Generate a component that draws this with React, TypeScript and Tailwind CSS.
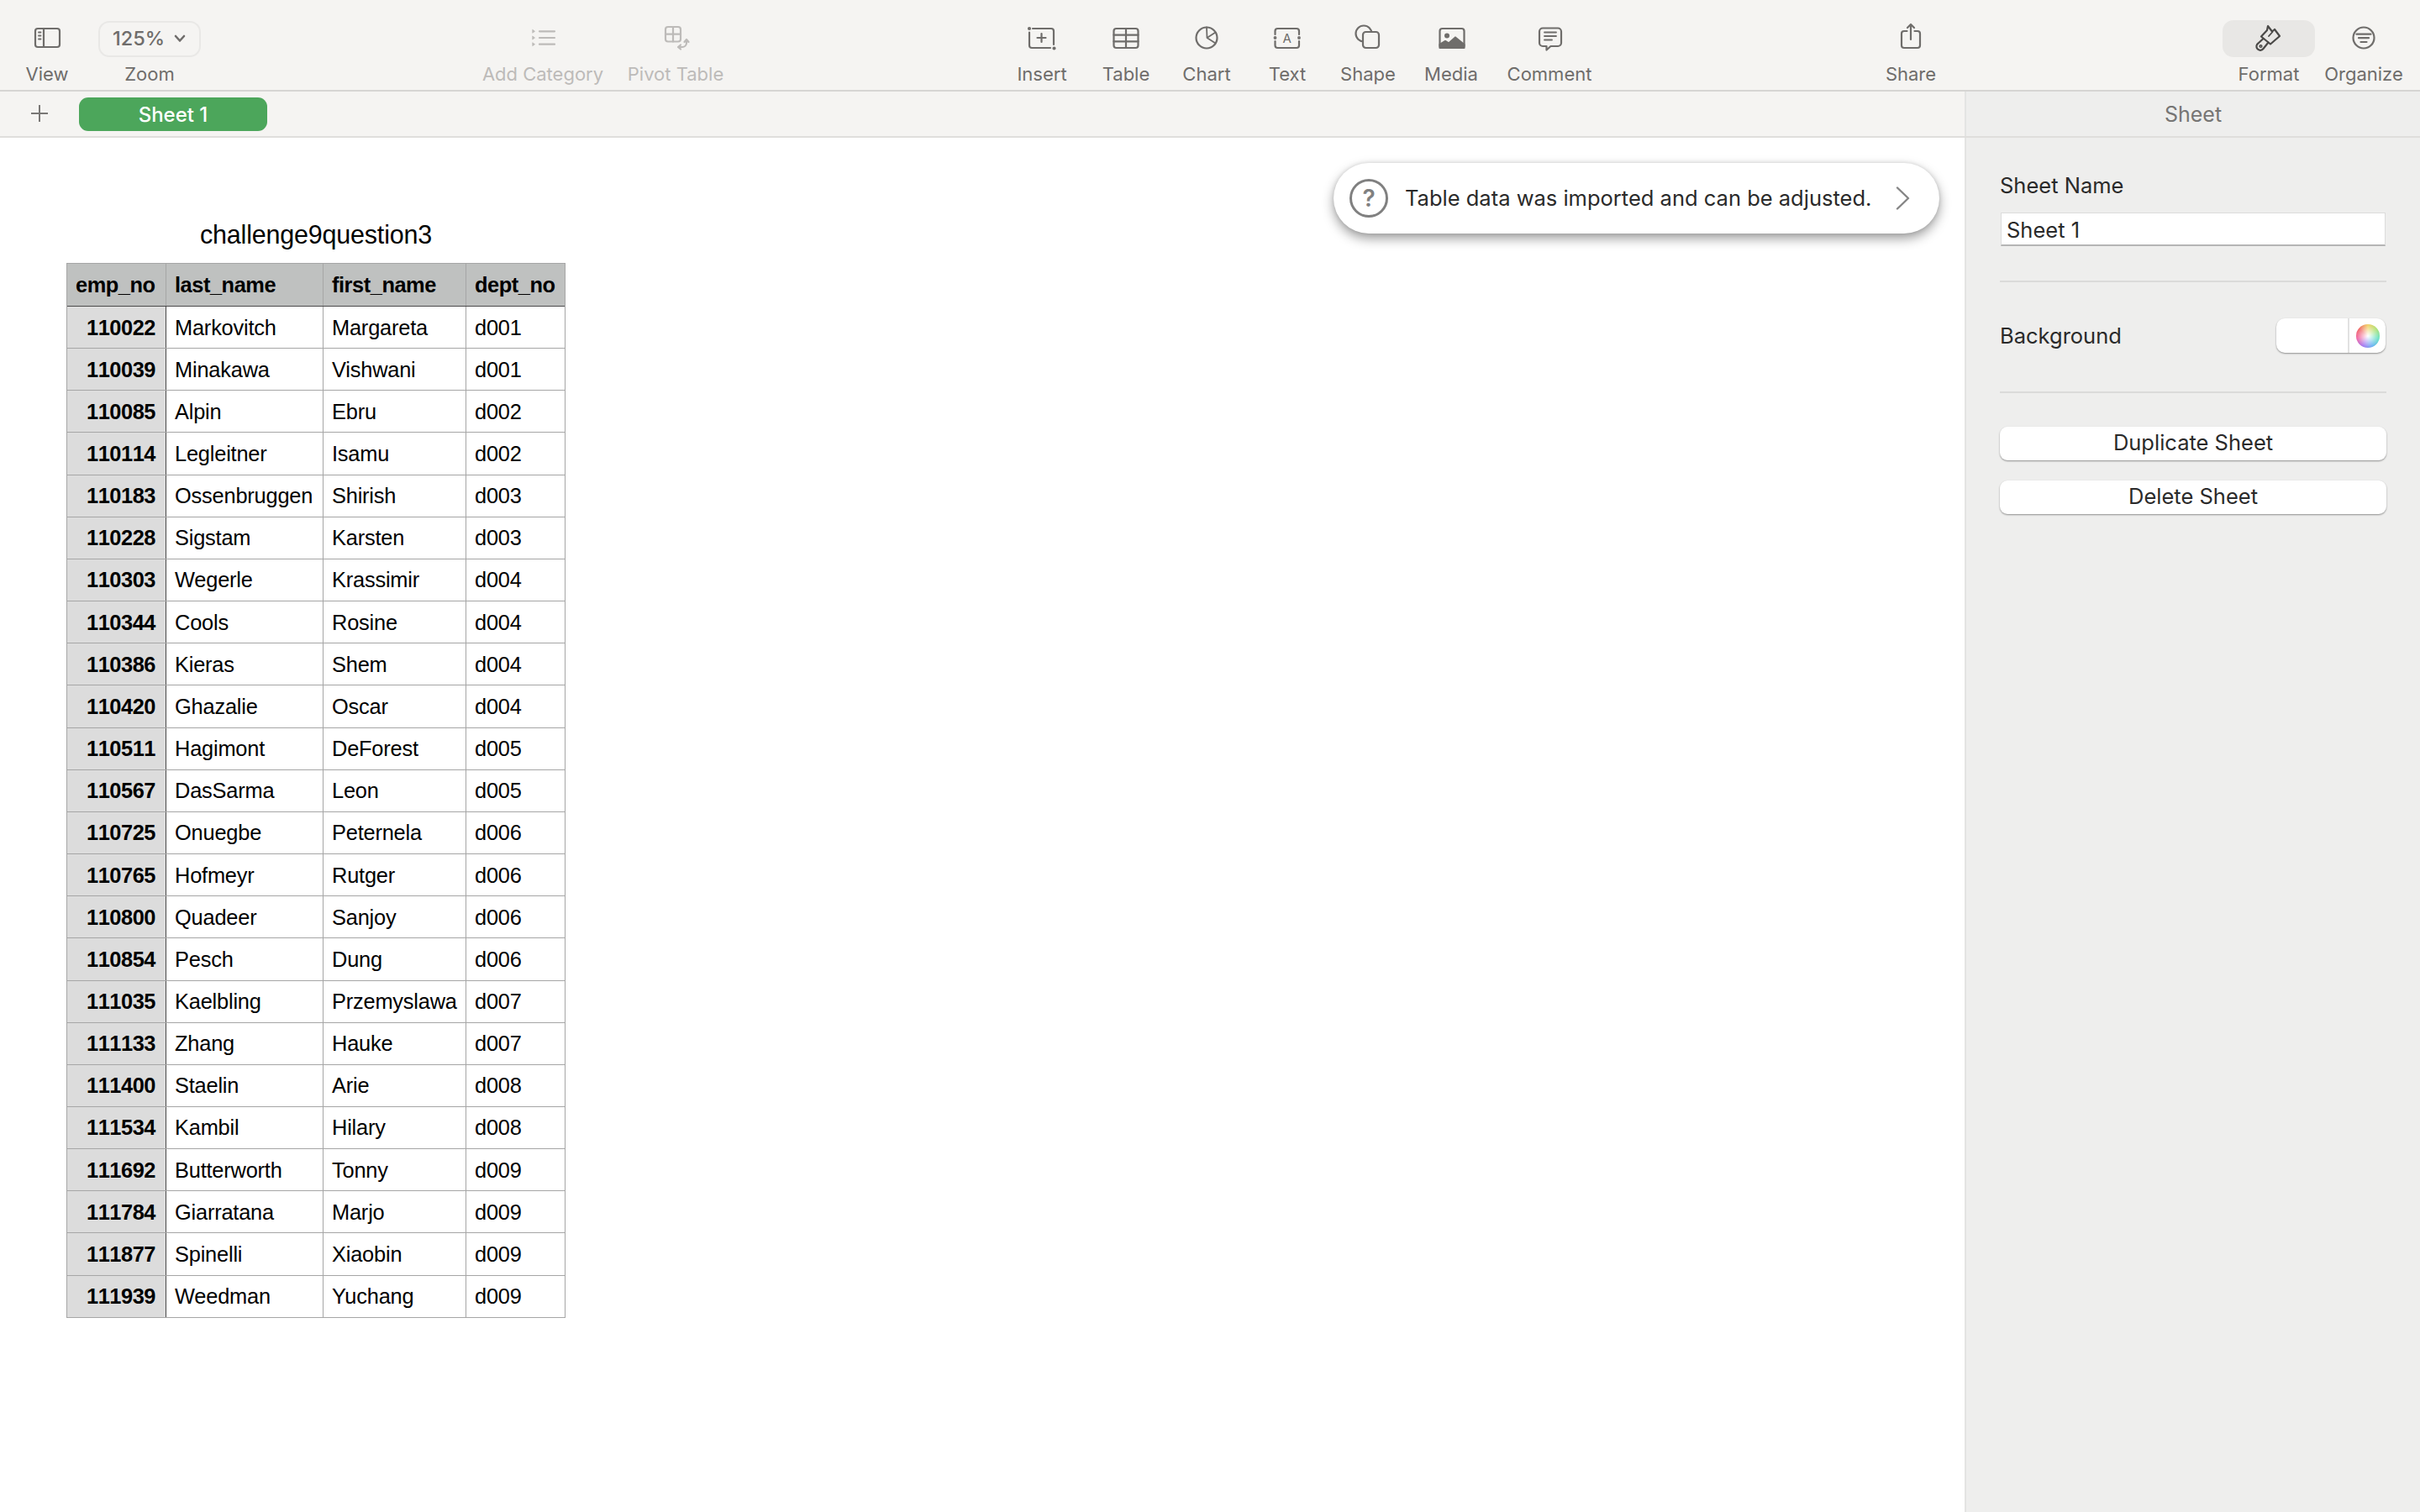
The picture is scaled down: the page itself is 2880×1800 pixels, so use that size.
import React from "react";

const rows = [
  ["110022", "Markovitch", "Margareta", "d001"],
  ["110039", "Minakawa", "Vishwani", "d001"],
  ["110085", "Alpin", "Ebru", "d002"],
  ["110114", "Legleitner", "Isamu", "d002"],
  ["110183", "Ossenbruggen", "Shirish", "d003"],
  ["110228", "Sigstam", "Karsten", "d003"],
  ["110303", "Wegerle", "Krassimir", "d004"],
  ["110344", "Cools", "Rosine", "d004"],
  ["110386", "Kieras", "Shem", "d004"],
  ["110420", "Ghazalie", "Oscar", "d004"],
  ["110511", "Hagimont", "DeForest", "d005"],
  ["110567", "DasSarma", "Leon", "d005"],
  ["110725", "Onuegbe", "Peternela", "d006"],
  ["110765", "Hofmeyr", "Rutger", "d006"],
  ["110800", "Quadeer", "Sanjoy", "d006"],
  ["110854", "Pesch", "Dung", "d006"],
  ["111035", "Kaelbling", "Przemyslawa", "d007"],
  ["111133", "Zhang", "Hauke", "d007"],
  ["111400", "Staelin", "Arie", "d008"],
  ["111534", "Kambil", "Hilary", "d008"],
  ["111692", "Butterworth", "Tonny", "d009"],
  ["111784", "Giarratana", "Marjo", "d009"],
  ["111877", "Spinelli", "Xiaobin", "d009"],
  ["111939", "Weedman", "Yuchang", "d009"],
];

// every toolbar glyph sits in the same 40x44 box
function Glyph({ children, color = "#6f6d6b" }: { children: React.ReactNode; color?: string }) {
  return (
    <svg width="40" height="44" viewBox="0 0 40 44" fill="none" stroke={color} strokeWidth="2.2" strokeLinecap="round" strokeLinejoin="round">
      {children}
    </svg>
  );
}

function ToolItem({ label, className, disabled, children }: { label: string; className: string; disabled?: boolean; children: React.ReactNode }) {
  return (
    <div className={`flex flex-col items-center shrink-0 ${className}`}>
      <div className="h-[44px] flex items-center justify-center">{children}</div>
      <div className={`mt-[6px] text-[22px] leading-[28px] whitespace-nowrap ${disabled ? "text-[#bdbbb9]" : "text-[#6f6d6b]"}`}>{label}</div>
    </div>
  );
}

function Toolbar() {
  const off = "#bdbbb9";
  return (
    <div className="h-[109px] shrink-0 bg-[#f5f4f2] border-b-2 border-[#d6d5d3] flex items-start pt-[24px] pl-[26px]">
      <ToolItem label="View" className="w-[60px]">
        <Glyph>
          <rect x="6" y="10" width="29" height="22" rx="3" />
          <path d="M16 10V32" />
          <path d="M10 14.5H12.5M10 18.5H12.5M10 22.5H12.5" strokeWidth="1.8" />
        </Glyph>
      </ToolItem>

      <ToolItem label="Zoom" className="w-[122px] ml-[31px]">
        <div className="w-[122px] h-[43px] rounded-[13px] border-2 border-[#e9e8e6] flex items-center pl-[15px] text-[#6f6d6b] text-[23.5px] font-medium">
          <span>125%</span>
          <svg className="ml-[11px]" width="14" height="10" viewBox="0 0 14 10" fill="none" stroke="#6f6d6b" strokeWidth="2.6" strokeLinecap="round" strokeLinejoin="round">
            <path d="M2 2L7 7.5L12 2" />
          </svg>
        </div>
      </ToolItem>

      <ToolItem label="Add Category" disabled className="w-[160px] ml-[327px]">
        <Glyph color={off}>
          <path d="M16 13.3H34M16 21H34M16 28.7H34" />
          <path d="M8 11.5L10.5 13.3L8 15ZM8 19.2L10.5 21L8 22.8ZM8 27L10.5 28.7L8 30.4Z" fill={off} strokeWidth="0.8" />
        </Glyph>
      </ToolItem>

      <ToolItem label="Pivot Table" disabled className="w-[120px] ml-[18px]">
        <Glyph color={off}>
          <rect x="8" y="8" width="18" height="17.5" rx="3" />
          <path d="M17 8V25.5M8 16.7H26" />
          <path d="M33 25V27A5 5 0 0 1 28 32H24" />
          <path d="M30.5 26L33 23L35.5 26M26 29.5L23 32L26 34.5" />
        </Glyph>
      </ToolItem>

      <ToolItem label="Insert" className="w-[80px] ml-[336px]">
        <Glyph>
          <path d="M9 10H31A3 3 0 0 1 34 13V29" />
          <path d="M5 14.5V30A3 3 0 0 0 8 33H30" />
          <circle cx="5" cy="10" r="1" />
          <circle cx="34.5" cy="33.5" r="1" />
          <path d="M19.5 16V26M14.5 21H24.5" />
        </Glyph>
      </ToolItem>

      <ToolItem label="Table" className="w-[80px] ml-[20px]">
        <Glyph>
          <rect x="5.5" y="10" width="29" height="23" rx="3" />
          <path d="M5.5 17.6H34.5M5.5 25.3H34.5M20 10V33" />
        </Glyph>
      </ToolItem>

      <ToolItem label="Chart" className="w-[80px] ml-[16px]">
        <Glyph>
          <circle cx="20" cy="21" r="12.5" />
          <path d="M20 8.5L20.5 21L30.5 27.5M20.5 21L30.5 14.5" strokeWidth="1.8" />
        </Glyph>
      </ToolItem>

      <ToolItem label="Text" className="w-[80px] ml-[16px]">
        <Glyph>
          <path d="M5.5 17V13A3 3 0 0 1 8.5 10H31A3 3 0 0 1 34 13V17" />
          <path d="M5.5 25V30A3 3 0 0 0 8.5 33H31A3 3 0 0 0 34 30V25" />
          <circle cx="5.5" cy="21" r="0.8" />
          <circle cx="34" cy="21" r="0.8" />
          <text x="19.8" y="27" textAnchor="middle" fontFamily="Inter, sans-serif" fontSize="15" fill="#6f6d6b" stroke="none">A</text>
        </Glyph>
      </ToolItem>

      <ToolItem label="Shape" className="w-[80px] ml-[16px]">
        <Glyph>
          <circle cx="15" cy="16" r="9.5" />
          <rect x="14" y="14" width="19" height="19" rx="3.5" fill="#f5f4f2" />
        </Glyph>
      </ToolItem>

      <ToolItem label="Media" className="w-[80px] ml-[19px]">
        <Glyph>
          <rect x="6.5" y="10" width="29" height="23" rx="3" />
          <circle cx="15" cy="18.5" r="3" fill="#6f6d6b" stroke="none" />
          <path d="M6.5 33V29L13 25L17 27.5L25 20.5L35.5 29V33Z" fill="#6f6d6b" stroke="#6f6d6b" />
        </Glyph>
      </ToolItem>

      <ToolItem label="Comment" className="w-[120px] ml-[17px]">
        <Glyph>
          <path d="M12 9.5H30A4 4 0 0 1 34 13.5V27A4 4 0 0 1 30 31H21.5L16.5 35.5V31H12A4 4 0 0 1 8 27V13.5A4 4 0 0 1 12 9.5Z" />
          <path d="M14 14.5H28M14 19H28M14 23.5H23" strokeWidth="1.8" />
        </Glyph>
      </ToolItem>

      <ToolItem label="Share" className="w-[80px] ml-[330px]">
        <Glyph>
          <path d="M15.5 13H12A3 3 0 0 0 9 16V30A3 3 0 0 0 12 33H28A3 3 0 0 0 31 30V16A3 3 0 0 0 28 13H24.5" />
          <path d="M20 5V23M16 9L20 5L24 9" />
        </Glyph>
      </ToolItem>

      <ToolItem label="Format" className="w-[110px] ml-[331px]">
        <div className="w-[110px] h-[44px] rounded-[13px] bg-[#e8e7e5] flex items-center justify-center">
          <Glyph color="#4a4947">
            <path d="M19 7L18 12L11 19.5L22 28.5L33 19L27 11L24 13.5Z" />
            <path d="M13.5 22L7.5 27.5A4.5 4.5 0 1 0 13.5 34L19.5 26.5" />
            <circle cx="10.5" cy="31" r="1.3" strokeWidth="1.6" />
            <path d="M20 19L24.5 14" strokeWidth="1.8" />
          </Glyph>
        </div>
      </ToolItem>

      <ToolItem label="Organize" className="w-[100px] ml-[8px]">
        <Glyph>
          <circle cx="20" cy="21" r="12.5" />
          <path d="M11.5 16.7H28.5M14 21.2H26M16.5 26H23.5" />
        </Glyph>
      </ToolItem>
    </div>
  );
}

function TabBar() {
  return (
    <div className="h-[55px] shrink-0 flex bg-[#f5f4f2] border-b-2 border-[#dfdedc]">
      <div className="flex-1 flex items-start pt-[7px] pl-[37px]">
        <svg className="mt-[9px]" width="20" height="20" viewBox="0 0 20 20" stroke="#7a7876" strokeWidth="2" strokeLinecap="round">
          <path d="M10 0.5V19.5M0.5 10H19.5" />
        </svg>
        <div className="ml-[37px] w-[224px] h-[40px] pt-[1px] rounded-[11px] bg-[#4ca65b] flex items-center justify-center text-white text-[24px] font-medium">
          Sheet 1
        </div>
      </div>
      <div className="w-[542px] pt-[2px] bg-[#eeeeed] border-l-2 border-[#e4e4e3] flex items-center justify-center text-[#767574] text-[25px]">
        Sheet
      </div>
    </div>
  );
}

function DataTable() {
  return (
    <div className="w-[594px] ml-[79px] font-['Liberation_Sans',Arial,sans-serif] text-black text-[25.4px] tracking-[-0.2px]">
      <div className="text-center text-[30.5px] leading-[47px] mb-[10px]">challenge9question3</div>
      <div className="border border-b-0 border-[#a6a6a6]">
        <div className="grid grid-cols-[118px_187px_170px_117px] h-[51px] bg-[#bfc1c0] font-bold tracking-[-0.45px] border-b border-[#4a4a4a]">
          {["emp_no", "last_name", "first_name", "dept_no"].map((h, i) => (
            <div key={h} className={`flex items-center pl-[10px] ${i < 3 ? "border-r border-[#a6a6a6]" : ""}`}>
              {h}
            </div>
          ))}
        </div>
        {rows.map((r) => (
          <div key={r[0]} className="grid grid-cols-[118px_187px_170px_117px] h-[50.17px] border-b border-[#a6a6a6]">
            <div className="bg-[#dcdcdc] border-r border-[#4a4a4a] flex items-center justify-end pr-[12px] font-bold tracking-[-0.45px] [font-kerning:none]">{r[0]}</div>
            <div className="border-r border-[#a6a6a6] flex items-center pl-[10px]">{r[1]}</div>
            <div className="border-r border-[#a6a6a6] flex items-center pl-[10px]">{r[2]}</div>
            <div className="flex items-center pl-[10px]">{r[3]}</div>
          </div>
        ))}
      </div>
    </div>
  );
}

function Notice() {
  return (
    <div className="absolute top-[30px] right-[30px] w-[721px] h-[84px] rounded-full bg-white flex items-center pl-[19px] shadow-[0_6px_14px_rgba(0,0,0,0.38),0_0_5px_rgba(0,0,0,0.12)]">
      <div className="w-[46px] h-[46px] rounded-full border-[3px] border-[#808080] flex items-center justify-center text-[#808080] text-[28px] font-semibold">?</div>
      <div className="ml-[20px] pt-[1px] text-[25.5px] text-[#2a2a2a] whitespace-nowrap">Table data was imported and can be adjusted.</div>
      <svg className="ml-[29px]" width="17" height="28" viewBox="0 0 17 28" fill="none" stroke="#858585" strokeWidth="2.4" strokeLinecap="round" strokeLinejoin="round">
        <path d="M2 1.5L15 14L2 26.5" />
      </svg>
    </div>
  );
}

function SidePanel() {
  const btn = "h-[40px] pb-[1px] rounded-[9px] bg-white flex items-center justify-center text-[25.5px] text-[#2a2a2a] shadow-[0_1px_2px_rgba(0,0,0,0.4)]";
  return (
    <div className="w-[542px] shrink-0 bg-[#eeeeed] border-l-2 border-[#e4e4e3] px-[40px] pt-[41px] text-[#2a2a2a] text-[25.5px]">
      <div className="leading-[32px]">Sheet Name</div>
      <div className="mt-[16px] mx-[1px] h-[40px] pt-[4px] bg-white border border-[#dcdcdc] border-b-[#b5b5b5] border-b-2 pl-[6px] flex items-center">Sheet 1</div>
      <div className="mt-[41px] h-[2px] bg-[#dbdbda]" />
      <div className="mt-[43px] flex items-center justify-between h-[41px]">
        <span className="pt-[2px]">Background</span>
        <div className="mr-[1px] w-[130px] h-[41px] rounded-[10px] bg-white flex shadow-[0_1px_2px_rgba(0,0,0,0.4)]">
          <div className="w-[87px] border-r-2 border-[#e2e2e2]" />
          <div className="flex-1 flex items-center justify-center">
            <div className="w-[28px] h-[28px] rounded-full bg-[radial-gradient(circle,#ffffff_0%,#ffffff00_72%),conic-gradient(#f0d060,#a8e070,#60e0c0,#60b0f0,#a070f0,#f060a0,#f06060,#f0d060)]" />
          </div>
        </div>
      </div>
      <div className="mt-[46px] h-[2px] bg-[#dbdbda]" />
      <div className={`mt-[40px] ${btn}`}>Duplicate Sheet</div>
      <div className={`mt-[24px] ${btn}`}>Delete Sheet</div>
    </div>
  );
}

export default function App() {
  return (
    <div className="w-screen h-screen overflow-hidden flex flex-col bg-white font-['Inter',sans-serif]">
      <Toolbar />
      <TabBar />
      <div className="flex-1 flex min-h-0">
        <div className="flex-1 relative pt-[92px]">
          <DataTable />
          <Notice />
        </div>
        <SidePanel />
      </div>
    </div>
  );
}
